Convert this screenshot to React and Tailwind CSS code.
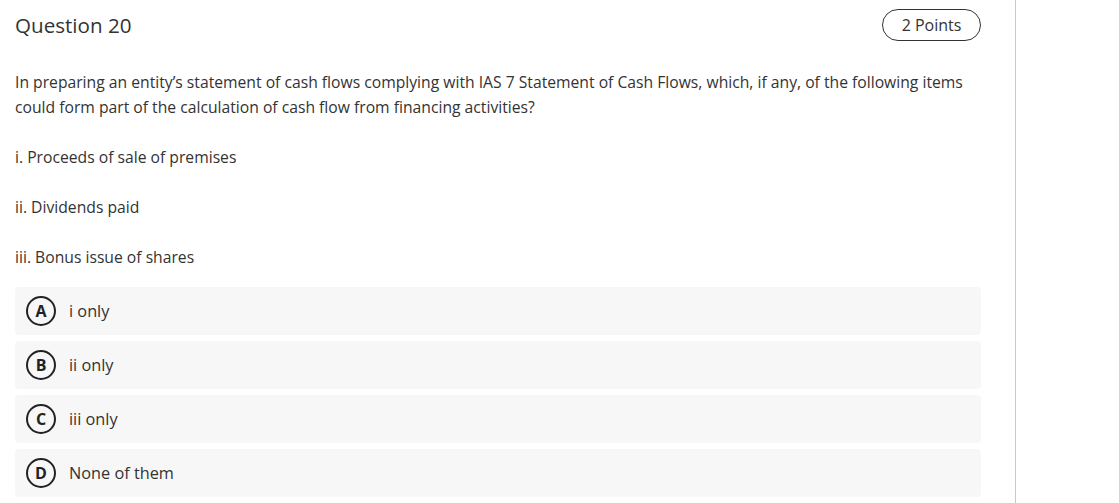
const options = [
  { letter: 'A', text: 'i only' },
  { letter: 'B', text: 'ii only' },
  { letter: 'C', text: 'iii only' },
  { letter: 'D', text: 'None of them' },
];

const App = () => {
  return (
    <div
      className="min-h-screen flex bg-white text-[#333]"
      style={{ fontFamily: '"Open Sans", "Liberation Sans", sans-serif' }}
    >
      <div className="w-[1016px] min-h-screen border-r border-[#c8c8c8] pl-[15px] pr-[34px]">
        <div className="flex items-center justify-between pt-[9px]">
          <h2 className="text-[20.6px] font-medium leading-[32px]">Question 20</h2>
          <span className="h-[32px] w-[99px] flex items-center justify-center rounded-full border border-[#333] text-[16px]">
            2 Points
          </span>
        </div>

        <div className="mt-[29px] text-[15.7px] leading-[25px]">
          <p className="mb-[25px]">
            In preparing an entity’s statement of cash flows complying with IAS 7 Statement of Cash Flows, which, if any, of the following items could form part of the calculation of cash flow from financing activities?
          </p>
          <p className="mb-[25px]">i. Proceeds of sale of premises</p>
          <p className="mb-[25px]">ii. Dividends paid</p>
          <p>iii. Bonus issue of shares</p>
        </div>

        <div className="mt-[17px] flex flex-col gap-[6px]">
          {options.map((opt) => (
            <div
              key={opt.letter}
              className="h-[48px] flex items-center rounded-[4px] bg-[#f7f7f7] pl-[11px]"
            >
              <span className="w-[30px] h-[30px] shrink-0 flex items-center justify-center rounded-full border-2 border-[#222] text-[16px] font-bold text-[#222]">
                {opt.letter}
              </span>
              <span className="ml-[13px] text-[16.3px]">{opt.text}</span>
            </div>
          ))}
        </div>
      </div>
    </div>
  );
};

export default App;
